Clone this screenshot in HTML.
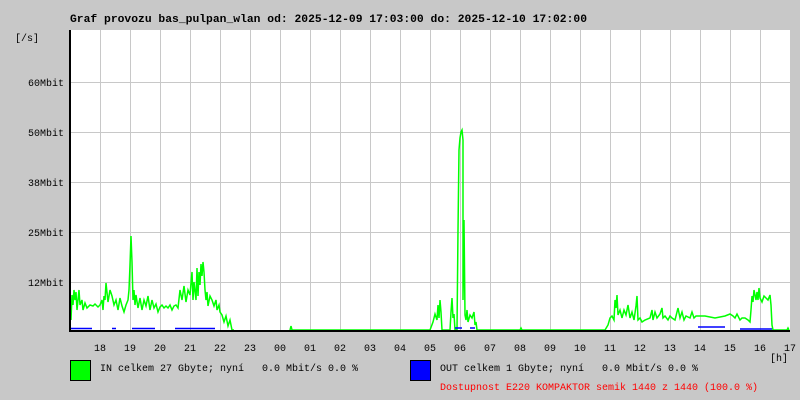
<!DOCTYPE html>
<html><head><meta charset="utf-8"><style>
html,body{margin:0;padding:0;background:#c8c8c8;width:800px;height:400px;overflow:hidden}
svg text{font-family:"Liberation Mono",monospace;font-size:10px;white-space:pre}
</style></head><body>
<svg width="800" height="400" xmlns="http://www.w3.org/2000/svg" xml:space="preserve">
<rect width="800" height="400" fill="#c8c8c8"/>
<rect x="70" y="30" width="720" height="300" fill="#fff"/>
<g stroke="#c8c8c8" stroke-width="1">
<path d="M100.5 30V330M130.5 30V330M160.5 30V330M190.5 30V330M220.5 30V330M250.5 30V330M280.5 30V330M310.5 30V330M340.5 30V330M370.5 30V330M400.5 30V330M430.5 30V330M460.5 30V330M490.5 30V330M520.5 30V330M550.5 30V330M580.5 30V330M610.5 30V330M640.5 30V330M670.5 30V330M700.5 30V330M730.5 30V330M760.5 30V330"/>
<path d="M64 82.5H790M64 132.5H790M64 182.5H790M64 232.5H790M64 282.5H790"/>
</g>
<g fill="none" stroke="#00ff00" stroke-width="1.5">
<polyline points="71,320 72,295 73,305 74,290 75,300 76,292 77,310 78,300 79,290 80,305 82,300 83,310 85,303 87,308 90,305 93,306 95,304 98,307 100,305 102,300 103,310 104,296 105,300 106,283 108,302 110,290 112,296 114,305 116,300 118,310 120,298 122,306 124,312 126,305 128,300 129,290 130,265 131,236 132,262 133,300 134,290 135,305 136,295 138,308 140,298 142,310 144,300 146,306 148,296 150,310 152,300 154,308 156,304 158,312 160,307 162,305 164,308 166,306 168,308 170,305 172,310 174,306 176,305 178,308 180,290 182,300 184,286 186,302 188,290 190,295 192,272 193,300 194,282 196,300 197,268 198,296 199,272 200,285 201,264 202,276 203,262 204,272 205,290 206,300 207,292 208,306 210,296 212,300 214,306 216,300 217,310 219,305 220,312 222,315 224,322 226,316 228,326 230,320 232,330 234,330"/>
<polyline points="290,330 291,326 292,330 430,330 433,322 435,314 437,320 438,305 439,318 440,300 441,312 442,330 450,330 451,312 452,298 453,318 454,314 455,330 457,330 458,230 459,150 460,138 461,132 462,130 463,140 463,300 464,220 465,315 466,320 467,310 468,322 470,315 472,318 474,312 475,325 476,322 477,330 520,330 521,328 522,330 605,330 608,325 610,318 612,316 614,320 615,300 616,308 617,295 618,315 620,310 622,318 624,310 626,315 628,305 630,318 632,312 634,320 636,306 637,296 638,320 640,318 642,322 645,320 650,318 652,310 653,320 655,312 657,318 660,314 662,308 663,318 665,316 668,320 670,316 672,318 675,320 678,308 680,318 682,312 684,320 686,316 690,318 692,312 694,318 696,316 700,316 705,316 710,317 715,318 720,317 725,316 730,314 733,316 735,318 737,314 740,320 742,318 745,318 748,320 750,322 751,310 752,296 753,302 754,290 756,300 757,292 758,300 759,288 760,298 762,302 764,296 766,298 768,300 770,295 771,305 772,325 773,330 787,330 788,328 789,330"/>
</g>
<g fill="none" stroke="#0000ff" stroke-width="1.5">
<path d="M71 328.5H92M112 328.5H116M132 328.5H155M175 328.5H215M455 328H462M470 328H475M698 327H725M740 329H772"/>
</g>
<path d="M70 30V331H790" fill="none" stroke="#000" stroke-width="2"/>
<g fill="#000">
<text x="70" y="22" font-weight="bold" style="font-size:11px" textLength="517" lengthAdjust="spacingAndGlyphs">Graf provozu bas_pulpan_wlan od: 2025-12-09 17:03:00 do: 2025-12-10 17:02:00</text>
<text x="15" y="41">[/s]</text>
<text x="64" y="86" text-anchor="end">60Mbit</text>
<text x="64" y="136" text-anchor="end">50Mbit</text>
<text x="64" y="186" text-anchor="end">38Mbit</text>
<text x="64" y="236" text-anchor="end">25Mbit</text>
<text x="64" y="286" text-anchor="end">12Mbit</text>
<g text-anchor="middle">
<text x="100" y="351">18</text><text x="130" y="351">19</text><text x="160" y="351">20</text><text x="190" y="351">21</text><text x="220" y="351">22</text><text x="250" y="351">23</text><text x="280" y="351">00</text><text x="310" y="351">01</text><text x="340" y="351">02</text><text x="370" y="351">03</text><text x="400" y="351">04</text><text x="430" y="351">05</text><text x="460" y="351">06</text><text x="490" y="351">07</text><text x="520" y="351">08</text><text x="550" y="351">09</text><text x="580" y="351">10</text><text x="610" y="351">11</text><text x="640" y="351">12</text><text x="670" y="351">13</text><text x="700" y="351">14</text><text x="730" y="351">15</text><text x="760" y="351">16</text><text x="790" y="351">17</text>
</g>
<text x="770" y="361">[h]</text>
<text x="100" y="371">IN celkem 27 Gbyte; nyní   0.0 Mbit/s 0.0 %</text>
<text x="440" y="371">OUT celkem 1 Gbyte; nyní   0.0 Mbit/s 0.0 %</text>
</g>
<text x="440" y="390" fill="#ff0000">Dostupnost E220 KOMPAKTOR semik 1440 z 1440 (100.0 %)</text>
<rect x="70.5" y="360.5" width="20" height="20" fill="#00ff00" stroke="#000"/>
<rect x="410.5" y="360.5" width="20" height="20" fill="#0000ff" stroke="#000"/>
</svg>
</body></html>
